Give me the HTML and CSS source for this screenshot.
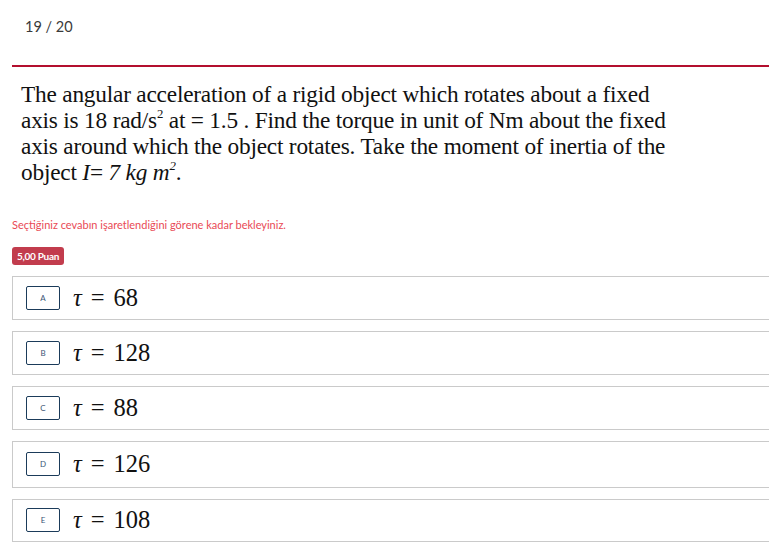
FILE: index.html
```html
<!DOCTYPE html>
<html lang="tr">

<head>
    <meta charset="UTF-8">
    <meta name="viewport" content="width=device-width, initial-scale=1.0">
    <title>Soru 19</title>
    <link rel="stylesheet" href="styles.css">
</head>

<body>
    <div class="page">
        <div class="counter">19 / 20</div>
        <div class="divider"></div>
        <p class="question">
            The angular acceleration of a rigid object which rotates about a fixed<br>
            axis is 18 rad/s<sup>2</sup> at = 1.5 . Find the torque in unit of Nm about the fixed<br>
            axis around which the object rotates. Take the moment of inertia of the<br>
            object <i>I</i>= <i>7 kg m<sup>2</sup></i>.
        </p>
        <p class="notice">Seçtiğiniz cevabın işaretlendiğini görene kadar bekleyiniz.</p>
        <span class="badge">5,00 Puan</span>
        <ul class="options">
            <li class="option">
                <span class="letter">A</span>
                <span class="math"><i>τ</i><span class="eq">=</span>68</span>
            </li>
            <li class="option">
                <span class="letter">B</span>
                <span class="math"><i>τ</i><span class="eq">=</span>128</span>
            </li>
            <li class="option">
                <span class="letter">C</span>
                <span class="math"><i>τ</i><span class="eq">=</span>88</span>
            </li>
            <li class="option option-tall">
                <span class="letter">D</span>
                <span class="math"><i>τ</i><span class="eq">=</span>126</span>
            </li>
            <li class="option option-short">
                <span class="letter">E</span>
                <span class="math"><i>τ</i><span class="eq">=</span>108</span>
            </li>
        </ul>
    </div>
</body>

</html>
```

FILE: styles.css
```css
*{
    margin: 0;
    padding: 0;
    box-sizing: border-box;
}
body{
    width: 100vw;
    height: 100vh;
    overflow: hidden;
    background-color: #fff;
    font-family: Lato, "Open Sans", sans-serif;
}
.page{
    margin-left: 12px;
    width: calc(100% + 20px);
}
.counter{
    padding: 18px 0 0 13px;
    font-size: 14.5px;
    line-height: 18px;
    color: #3a3a3a;
}
.divider{
    margin-top: 29px;
    border-top: 2px solid #b30f2e;
}
.question{
    padding: 14px 0 0 9px;
    font-family: "Liberation Serif", "Times New Roman", serif;
    font-size: 23.3px;
    line-height: 26px;
    letter-spacing: -0.2px;
    color: #111;
    white-space: nowrap;
}
.question sup{
    font-size: 0.55em;
    line-height: 0;
    vertical-align: 0.75em;
}
.notice{
    margin-top: 33px;
    font-size: 11px;
    line-height: 14px;
    color: #e94a55;
}
.badge{
    display: inline-block;
    margin-top: 15px;
    padding: 0 5px;
    height: 18px;
    line-height: 18px;
    font-size: 10px;
    font-weight: bold;
    color: #fff;
    background-color: #c23c4d;
    border-radius: 3px;
    letter-spacing: -0.3px;
}
.options{
    list-style: none;
    margin-top: 11px;
}
.option{
    display: flex;
    align-items: center;
    gap: 13px;
    padding: 9px 13px;
    margin-bottom: 11px;
    border: 1px solid #cacaca;
}
.option-tall{
    margin-top: 1px;
    padding: 10px 13px 11px;
}
.option-short{
    padding: 8px 13px 9px;
}
.letter{
    display: flex;
    justify-content: center;
    align-items: center;
    width: 34px;
    height: 24px;
    border: 1px solid #1b3b5a;
    border-radius: 2px;
    font-size: 8px;
    color: #3b5575;
}
.math{
    font-family: "Liberation Serif", "Times New Roman", serif;
    font-size: 24.5px;
    line-height: 24px;
    color: #111;
}
.math .eq{
    margin: 0 9px;
}
```
